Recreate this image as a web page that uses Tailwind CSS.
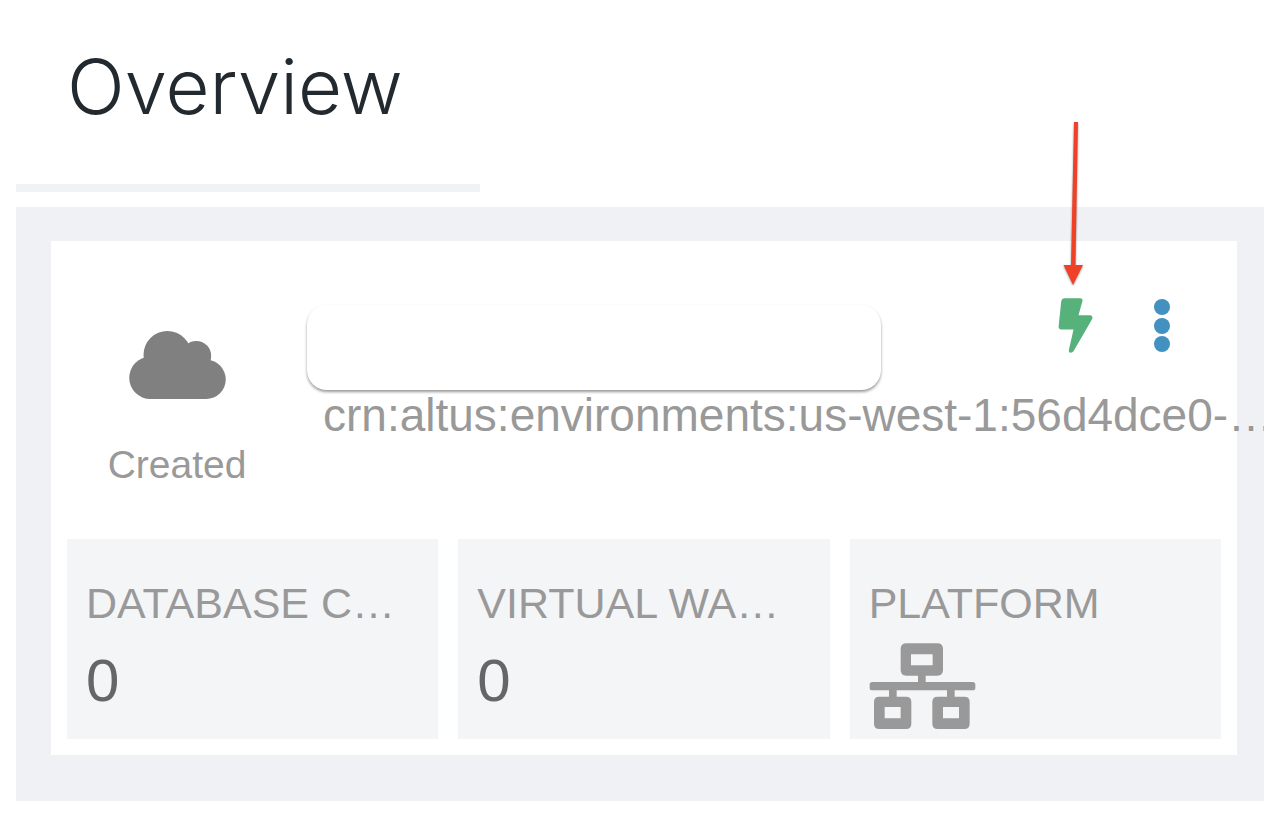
<!DOCTYPE html>
<html lang="en">
<head>
<meta charset="utf-8">
<meta name="viewport" content="width=device-width, initial-scale=1">
<title>Overview</title>
<script src="https://cdn.jsdelivr.net/npm/@tailwindcss/browser@4"></script>
</head>
<body class="bg-white font-['Liberation_Sans',Arial,sans-serif]">
<div class="relative flex flex-col overflow-hidden px-4 pb-4">
  <header class="w-[464px] border-b-8 border-[#f1f2f3] pt-[46px] pb-[58px] pl-[51px]">
    <h1 class="font-['Inter',sans-serif] text-[76px] leading-[80px] font-light text-[#22292f]">Overview</h1>
  </header>

  <main class="mt-[15px] overflow-hidden bg-[#f0f1f4] pt-[34px] pr-[27px] pb-[46px] pl-[35px]">
    <article class="bg-white px-4 pb-4">
      <div class="flex gap-5 pb-[54px]">
        <div class="flex w-[220px] shrink-0 flex-col items-center gap-[46px] pt-[90px]">
          <svg class="h-[68px] w-[97px]" viewBox="84 63 291 205" fill="#808080" aria-hidden="true">
            <circle cx="199" cy="135" r="72"/>
            <circle cx="286" cy="138" r="45"/>
            <circle cx="148" cy="204" r="64"/>
            <circle cx="316" cy="209" r="59"/>
            <path d="M148 140h168v128H148z"/>
          </svg>
          <p class="text-[39px] leading-[40px] text-[#999]">Created</p>
        </div>

        <div class="min-w-0 flex-1 pt-[57px]">
          <div class="flex items-start">
            <div class="mt-[7px] h-[85px] w-[574px] rounded-[20px] bg-white shadow-[0_2px_3px_rgba(0,0,0,0.4)]"></div>
            <div class="ml-auto flex items-start gap-[61px] pr-[51px]">
              <button type="button" aria-label="Activate" class="block">
                <svg class="h-[55px] w-[35px]" viewBox="114 564 104 166" fill="#57b17b" aria-hidden="true">
                  <path d="M132 565H180Q189 565 187 573L175 616H211Q220 618 216 628L160 725Q157 729 151 729Q145 728 146 721L160 659H121Q114 658 115 650L123 573Q125 565 132 565Z"/>
                </svg>
              </button>
              <button type="button" aria-label="More actions" class="mt-px block">
                <svg class="h-[54px] w-4" viewBox="0 0 16 54" fill="#4291c0" aria-hidden="true">
                  <circle cx="8" cy="8" r="8"/>
                  <circle cx="8" cy="27" r="8"/>
                  <circle cx="8" cy="45" r="8"/>
                </svg>
              </button>
            </div>
          </div>
          <p class="pl-4 text-[46px] leading-[50px] whitespace-nowrap text-[#999]">crn:altus:environments:us-west-1:56d4dce0-…</p>
        </div>
      </div>

      <div class="grid grid-cols-3 gap-5">
        <section class="bg-[#f4f5f7] pt-10 pb-[9px] pl-[19px]">
          <h2 class="text-[43px] leading-[48px] whitespace-nowrap text-[#999]">DATABASE C…</h2>
          <p class="mt-6 text-[60px] leading-[60px] text-[#666]">0</p>
        </section>
        <section class="bg-[#f4f5f7] pt-10 pb-[9px] pl-[19px]">
          <h2 class="text-[43px] leading-[48px] whitespace-nowrap text-[#999]">VIRTUAL WA…</h2>
          <p class="mt-6 text-[60px] leading-[60px] text-[#666]">0</p>
        </section>
        <section class="bg-[#f4f5f7] pt-10 pb-[9px] pl-[19px]">
          <h2 class="text-[43px] leading-[48px] whitespace-nowrap text-[#999]">PLATFORM</h2>
          <svg class="mt-4 h-[87px] w-[107px]" viewBox="88 340 321 261" fill="#999" aria-label="Cluster" role="img">
            <path fill-rule="evenodd" d="M200 341h93q17 0 17 17v63q0 17-17 17h-93q-17 0-17-17v-63q0-17 17-17zM214 374v33h65v-33z"/>
            <path fill-rule="evenodd" d="M119 501h80q16 0 16 16v65q0 16-16 16h-80q-16 0-16-16v-65q0-16 16-16zM135 532v34h48v-34z"/>
            <path fill-rule="evenodd" d="M294 501h80q16 0 16 16v65q0 16-16 16h-80q-16 0-16-16v-65q0-16 16-16zM310 532v34h48v-34z"/>
            <rect x="90" y="457" width="317" height="25" rx="8"/>
            <path d="M235 430h23v35h-23zM148 475h23v35h-23zM322 475h23v35h-23z"/>
          </svg>
        </section>
      </div>
    </article>
  </main>

  <!-- Callout arrow over the activate button -->
  <svg class="pointer-events-none absolute top-[118px] right-[187px] h-[176px] w-[40px] drop-shadow-[0_1px_1px_rgba(0,0,0,0.4)]" viewBox="1053 118 40 176" fill="#ee4128" aria-hidden="true">
    <path d="M1074 122h4l-2.500 143h7.500l-10 20-9.500-20h7.500z"/>
  </svg>
</div>
</body>
</html>
